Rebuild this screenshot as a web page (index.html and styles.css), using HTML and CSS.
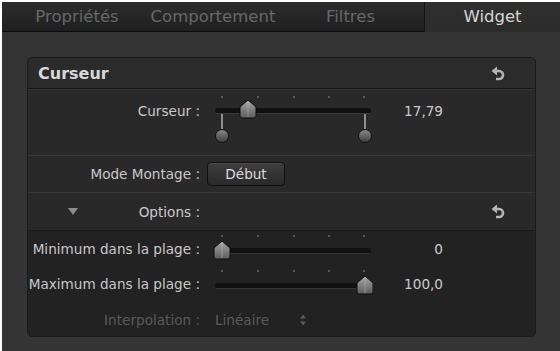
FILE: index.html
```html
<!DOCTYPE html>
<html>
<head>
    <title>Inspecteur - Widget</title>
    <link rel="stylesheet" href="styles.css">
</head>
<body>
    <div class="inspector">
        <div class="tabs">
            <div class="tab">Propriétés</div>
            <div class="tab">Comportement</div>
            <div class="tab">Filtres</div>
            <div class="tab tab-active">Widget</div>
        </div>

        <div class="content">
            <div class="panel">
                <div class="panel-head">
                    <span class="panel-title">Curseur</span>
                    <svg class="undo" width="14" height="15" viewBox="0 0 14 15">
                        <path d="M0.5 5 L6 0.5 L6 9.5 Z" fill="#b5b5b5"/>
                        <path d="M5 5 H8 A4 4 0 0 1 8 13 H5" fill="none" stroke="#b5b5b5" stroke-width="2.6"/>
                    </svg>
                </div>

                <!-- curseur principal -->
                <div class="row row-main">
                    <div class="label">Curseur :</div>
                    <svg class="slider" width="160" height="56" viewBox="0 0 160 56">
                        <defs>
                            <linearGradient id="thumb" x1="0" y1="0" x2="0" y2="1">
                                <stop offset="0" stop-color="#a8a8a8"/>
                                <stop offset="1" stop-color="#5c5c5c"/>
                            </linearGradient>
                            <linearGradient id="knob" x1="0" y1="0" x2="0" y2="1">
                                <stop offset="0" stop-color="#8a8a8a"/>
                                <stop offset="1" stop-color="#3e3e3e"/>
                            </linearGradient>
                        </defs>
                        <g fill="#8a8a8a">
                            <rect x="8.5" y="6" width="1" height="2"/>
                            <rect x="44.5" y="6" width="1" height="2"/>
                            <rect x="80.5" y="6" width="1" height="2"/>
                            <rect x="115.5" y="6" width="1" height="2"/>
                            <rect x="150.5" y="6" width="1" height="2"/>
                        </g>
                        <rect x="2" y="18" width="156" height="5" rx="2.5" fill="#111"/>
                        <rect x="3" y="23" width="154" height="1" fill="#3c3c3c"/>
                        <line x1="9" y1="24" x2="9" y2="40" stroke="#b0b0b0" stroke-width="1.5"/>
                        <circle cx="9" cy="46" r="6.5" fill="url(#knob)" stroke="#111"/>
                        <line x1="152" y1="24" x2="152" y2="40" stroke="#b0b0b0" stroke-width="1.5"/>
                        <circle cx="152" cy="46" r="6.5" fill="url(#knob)" stroke="#111"/>
                        <path d="M27 17 L35 10 L43 17 L43 26 Q43 28 41 28 L29 28 Q27 28 27 26 Z" fill="url(#thumb)" stroke="#0d0d0d"/>
                        <line x1="35" y1="11.5" x2="35" y2="27" stroke="#c4c4c4" stroke-opacity="0.45"/>
                    </svg>
                    <div class="value">17,79</div>
                </div>

                <div class="row row-mode">
                    <div class="label">Mode Montage :</div>
                    <div class="button">Début</div>
                </div>

                <div class="row row-options">
                    <svg class="disclosure" width="10" height="7" viewBox="0 0 10 7">
                        <path d="M0 0 H10 L5 7 Z" fill="#8c8c8c"/>
                    </svg>
                    <div class="label label-short">Options :</div>
                    <svg class="undo" width="14" height="15" viewBox="0 0 14 15">
                        <path d="M0.5 5 L6 0.5 L6 9.5 Z" fill="#b5b5b5"/>
                        <path d="M5 5 H8 A4 4 0 0 1 8 13 H5" fill="none" stroke="#b5b5b5" stroke-width="2.6"/>
                    </svg>
                </div>

                <div class="group">
                    <div class="row row-range">
                        <div class="label">Minimum dans la plage :</div>
                        <svg class="slider" width="160" height="32" viewBox="0 0 160 32">
                            <g fill="#8a8a8a">
                                <rect x="8.5" y="3" width="1" height="2"/>
                                <rect x="44.5" y="3" width="1" height="2"/>
                                <rect x="80.5" y="3" width="1" height="2"/>
                                <rect x="115.5" y="3" width="1" height="2"/>
                                <rect x="150.5" y="3" width="1" height="2"/>
                            </g>
                            <rect x="2" y="16" width="156" height="5" rx="2.5" fill="#111"/>
                            <rect x="3" y="21" width="154" height="1" fill="#363636"/>
                            <path d="M1 16 L9 9 L17 16 L17 25 Q17 27 15 27 L3 27 Q1 27 1 25 Z" fill="url(#thumb)" stroke="#0d0d0d"/>
                            <line x1="9" y1="10.5" x2="9" y2="26" stroke="#c4c4c4" stroke-opacity="0.45"/>
                        </svg>
                        <div class="value">0</div>
                    </div>

                    <div class="row row-range row-max">
                        <div class="label">Maximum dans la plage :</div>
                        <svg class="slider" width="160" height="32" viewBox="0 0 160 32">
                            <g fill="#8a8a8a">
                                <rect x="8.5" y="3" width="1" height="2"/>
                                <rect x="44.5" y="3" width="1" height="2"/>
                                <rect x="80.5" y="3" width="1" height="2"/>
                                <rect x="115.5" y="3" width="1" height="2"/>
                                <rect x="150.5" y="3" width="1" height="2"/>
                            </g>
                            <rect x="2" y="16" width="156" height="5" rx="2.5" fill="#111"/>
                            <rect x="3" y="21" width="154" height="1" fill="#363636"/>
                            <path d="M144 16 L152 9 L160 16 L160 25 Q160 27 158 27 L146 27 Q144 27 144 25 Z" fill="url(#thumb)" stroke="#0d0d0d"/>
                            <line x1="152" y1="10.5" x2="152" y2="26" stroke="#c4c4c4" stroke-opacity="0.45"/>
                        </svg>
                        <div class="value">100,0</div>
                    </div>

                    <div class="row row-interp">
                        <div class="label">Interpolation :</div>
                        <div class="popup">Linéaire</div>
                        <svg class="stepper" width="8" height="12" viewBox="0 0 8 12">
                            <path d="M4 0.5 L7 4.5 H1 Z M4 11.5 L7 7.5 H1 Z" fill="#585858"/>
                        </svg>
                    </div>
                </div>
            </div>
        </div>
    </div>
</body>
</html>
```

FILE: styles.css
```css
body {
    margin: 0;
    padding: 2px 0 0 2px;
    background: #fff;
    font-family: "DejaVu Sans", Verdana, sans-serif;
}
.inspector {
    width: 558px;
    height: 349px;
    background: #343434;
    display: flex;
    flex-direction: column;
}
.tabs {
    display: flex;
    height: 29px;
    padding-left: 3px;
    background: linear-gradient(#2c2c2c, #1f1f1f);
    border-bottom: 1px solid #0b0b0b;
}
.tab {
    line-height: 29px;
    text-align: center;
    font-size: 16.5px;
    color: #686868;
}
.tab:nth-child(1) { width: 144px; }
.tab:nth-child(2) { width: 128px; }
.tab:nth-child(3) { width: 147px; }
.tab-active {
    flex: 1;
    background: linear-gradient(#2f2f2f, #2b2b2b);
    color: #d6d6d6;
    border-left: 1px solid #141414;
    margin-bottom: -1px;
    height: 30px;
}
.content {
    flex: 1;
    padding: 25px 0 0 25px;
}
.panel {
    width: 507px;
    background: #292929;
    border: 1px solid #1a1a1a;
    border-radius: 5px;
    color: #c9c9c9;
    font-size: 13.6px;
    overflow: hidden;
}
.panel-head {
    height: 30px;
    display: flex;
    align-items: center;
    padding: 0 30px 0 10px;
    background: #2b2b2b;
    border-bottom: 1px solid #151515;
}
.panel-title {
    flex: 1;
    font-weight: bold;
    font-size: 16px;
    color: #d8d8d8;
}
.undo { flex: none; }
.row {
    display: flex;
    align-items: flex-start;
}
.label {
    width: 172px;
    flex: none;
    display: flex;
    justify-content: flex-end;
    white-space: nowrap;
    line-height: 16px;
}
.value {
    width: 70px;
    flex: none;
    text-align: right;
    line-height: 16px;
}
.slider {
    flex: none;
    margin-left: 13px;
}
.row-main {
    height: 65px;
    border-top: 1px solid #363636;
    border-bottom: 1px solid #373737;
}
.row-main .label, .row-main .value { padding-top: 13px; }
.row-mode {
    height: 36px;
    align-items: center;
    border-bottom: 1px solid #373737;
}
.button {
    margin-left: 7px;
    width: 76px;
    height: 22px;
    line-height: 22px;
    text-align: center;
    color: #dcdcdc;
    background: linear-gradient(#3e3e3e, #2a2a2a);
    border: 1px solid #0f0f0f;
    border-radius: 4px;
    box-shadow: inset 0 1px 0 rgba(255,255,255,0.08);
}
.row-options {
    height: 37px;
    align-items: center;
    padding-right: 30px;
}
.disclosure {
    flex: none;
    margin-left: 40px;
}
.label-short { width: 122px; }
.row-options .undo { margin-left: auto; }
.group {
    background: #222;
    border-top: 1px solid #1a1a1a;
}
.row-range { height: 35px; }
.row-max { height: 37px; }
.row-range .label, .row-range .value { padding-top: 10px; }
.row-range .slider { margin-top: 1px; }
.row-interp {
    height: 33px;
    align-items: center;
    color: #5a5a5a;
}
.popup {
    margin-left: 15px;
    width: 80px;
}
.stepper { margin-left: 4px; }
```
